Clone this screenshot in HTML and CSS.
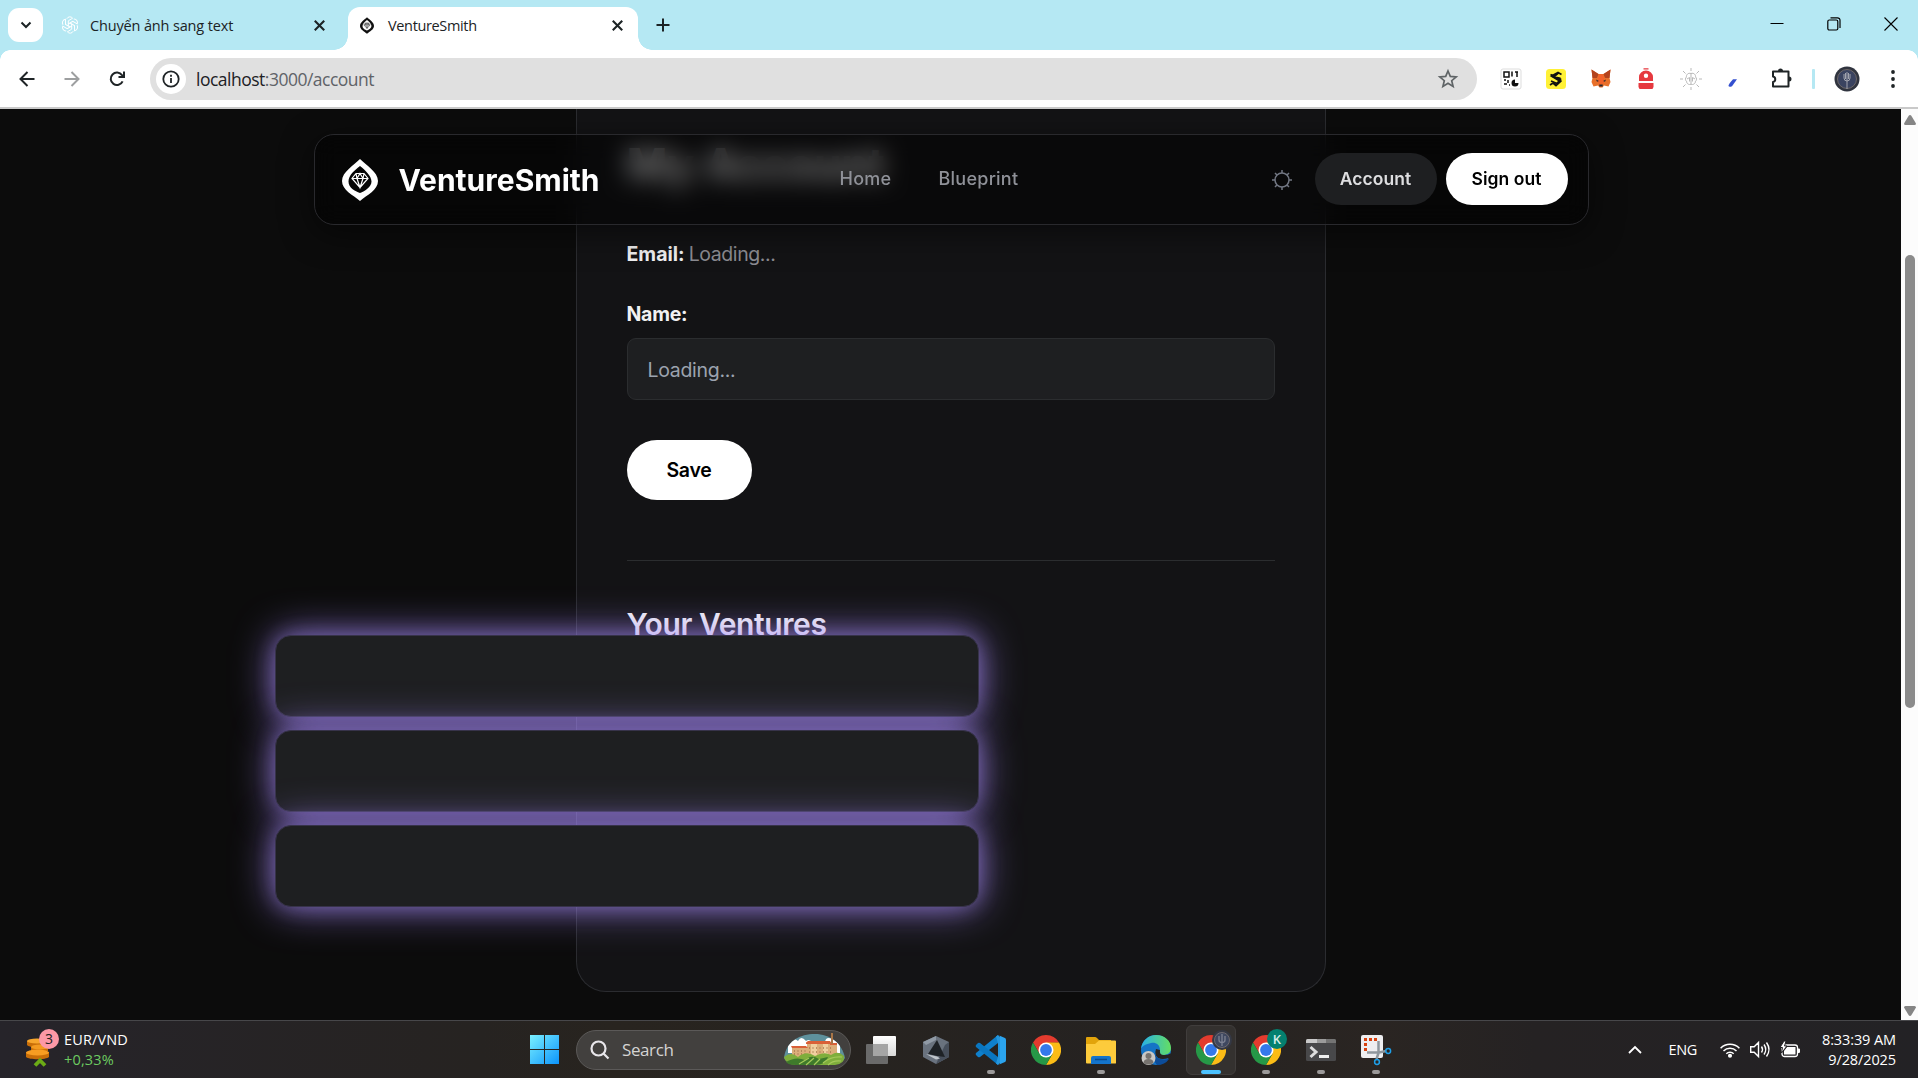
FILE: index.html
```html
<!DOCTYPE html>
<html lang="en">
<head>
<meta charset="utf-8">
<title>VentureSmith</title>
<link rel="stylesheet" href="styles.css">
</head>
<body>
<svg class="defs" width="0" height="0">
  <symbol id="chrome" viewBox="0 0 30 30">
    <path fill="#e33b2e" d="M15 0A15 15 0 0 1 28 7.500L15 8 8.500 18.700 2 7.500A15 15 0 0 1 15 0z"/>
    <path fill="#fbbc16" d="M28 7.500A15 15 0 0 1 15 30L21.500 18.700 15 7.500z"/>
    <path fill="#269847" d="M2 7.500A15 15 0 0 0 15 30l6.500-11.300L8.500 18.700z"/>
    <circle cx="15" cy="15" r="7.500" fill="#fff"/><circle cx="15" cy="15" r="5.900" fill="#3479ea"/>
  </symbol>
  <symbol id="x" viewBox="0 0 10 10"><path d="M.7.7l8.600 8.600M9.300.7L.7 9.300" fill="none" stroke="#1c2325" stroke-width="1.900"/></symbol>
  <symbol id="gem" viewBox="0 0 36 42">
    <path fill="currentColor" fill-rule="evenodd" d="M18 0C24 6 36 13 36 22 36 31 25 36 18 42 11 36 0 31 0 22 0 13 12 6 18 0zM18 7C13 11 6.500 16 6.500 22.500S13 32 18 34C23 32 29.500 28 29.500 22.500S23 11 18 7z"/>
    <path fill="none" stroke="currentColor" stroke-width="1.200" d="M14 14.500h8l4 5-8 9-8-9zM10 19.500h16M14 14.500l1 5L18 28.500l3-9 1-5M15 19.500l3-5 3 5"/>
  </symbol>
</svg>

<div class="tabs">
  <div class="tab-list"><svg width="12" height="8" viewBox="0 0 12 8"><path d="M1.500 1.500L6 6l4.500-4.500" fill="none" stroke="#1c2325" stroke-width="2"/></svg></div>
  <div class="tab">
    <svg width="18" height="18" viewBox="0 0 18 18" fill="none" stroke="#fff" stroke-width="1"><g id="k"><path d="M5.800 2.800a3.400 3.400 0 0 1 5.800-.6L7.300 4.800v5.200"/></g><use href="#k" transform="rotate(60 9 9)"/><use href="#k" transform="rotate(120 9 9)"/><use href="#k" transform="rotate(180 9 9)"/><use href="#k" transform="rotate(240 9 9)"/><use href="#k" transform="rotate(300 9 9)"/></svg>
    <span class="tab-title t1">Chuyển ảnh sang text</span>
    <svg class="close" width="11" height="11"><use href="#x"/></svg>
  </div>
  <div class="tab active">
    <svg class="dark" width="14" height="17"><use href="#gem"/></svg>
    <span class="tab-title t2">VentureSmith</span>
    <svg class="close" width="11" height="11"><use href="#x"/></svg>
  </div>
  <svg class="plus" width="14" height="14"><path d="M7 .5v13M.5 7h13" stroke="#1c2325" stroke-width="2"/></svg>
  <div class="win">
    <svg width="14" height="14"><path d="M.5 6.500h13" stroke="#000"/></svg>
    <svg width="14" height="14" fill="none" stroke="#000" stroke-width="1.200"><rect x=".8" y="3" width="10" height="10" rx="1.500"/><path d="M3.500.8h7a2.500 2.500 0 0 1 2.500 2.500V11"/></svg>
    <svg width="14" height="14"><path d="M.5.5l13 13M13.500.5l-13 13" stroke="#000" stroke-width="1.100"/></svg>
  </div>
</div>

<div class="toolbar">
  <div class="navs">
    <svg width="16" height="16" viewBox="0 0 16 16" fill="none" stroke="#1f2426" stroke-width="2"><path d="M15.500 8H2M8.500 1L1.500 8l7 7"/></svg>
    <svg width="16" height="16" viewBox="0 0 16 16" fill="none" stroke="#9d9fa0" stroke-width="2"><path d="M.5 8h14M7.500 1l7 7-7 7"/></svg>
    <svg width="16" height="16" viewBox="0 0 16 16" fill="none" stroke="#1f2426" stroke-width="2"><path d="M13.600 10.300A6.200 6.200 0 1 1 13 4.200L15 6M15 .5V6H9.500"/></svg>
  </div>
  <div class="omnibox">
    <div class="info"><svg width="18" height="18" fill="none" stroke="#1f2426" stroke-width="1.800"><circle cx="9" cy="9" r="7.700"/><path d="M9 8v5M9 4.800v1.900"/></svg></div>
    <span class="url">localhost<i>:3000/account</i></span>
    <svg class="star" width="20" height="19" viewBox="0 0 20 19"><path d="M10 2l2.300 5.400 5.900.5-4.500 3.800 1.400 5.700L10 14.300l-5.100 3.100 1.400-5.700L1.800 7.900l5.900-.5z" fill="none" stroke="#5f6466" stroke-width="1.700"/></svg>
  </div>
  <div class="ext">
    <svg width="22" height="22" viewBox="0 0 22 22"><rect x="1" y="1" width="20" height="20" rx="2" fill="#fff" stroke="#ddd"/><path fill="none" stroke="#111" stroke-width="1.500" d="M4 4h5v5H4zM12 3.500v5M15 4h3M17 4v5M4 12h2M8 12v3M4 16h3M9 17h1"/><path fill="#111" d="M15 11.500v3.500h3.500a3.500 3.500 0 1 1-3.500-3.500z"/></svg>
    <svg width="22" height="22" viewBox="0 0 22 22"><rect x="1" y="1" width="20" height="20" rx="3.500" fill="#fff136"/><path fill="none" stroke="#111" stroke-width="1.800" d="M16.500 6.500l-3.500-2L6.500 8l9 5.500-4.500 4-3-2.500-3 2M5.500 6.500l11 7M14 4.500L8.500 9l7 1.500M6 13l6 2.500 4-5"/></svg>
    <svg width="20" height="19" viewBox="0 0 20 19"><path fill="#e8702a" d="M.5.5L7.500 5h5l7-4.500L18.500 9l1 4-2 4.500-4.500-1-1.500 2h-3L7 16.500l-4.500 1-2-4.500 1-4z"/><path fill="#b4421c" d="M.5.5L7.500 5 6 9 1.500 9zM19.500.5L12.500 5 14 9h4.500z"/><path fill="#f2612a" d="M8 5.500h4l1.500 6.500L12 15H8l-1.500-3z"/><path fill="#2a2730" d="M5 10.500l3 1.500-2 .8zM15 10.500l-3 1.500 2 .8zM8.300 15.500h3.400v2H8.300z"/></svg>
    <svg width="16" height="21" viewBox="0 0 16 21"><path fill="#e6393f" fill-rule="evenodd" d="M1 13V9a7 6.500 0 0 1 14 0v4zM8 5.500a2.200 2.200 0 1 0 0 4.400 2.200 2.200 0 0 0 0-4.400z"/><path fill="#e6393f" d="M5.500.3h5v1.200h-5zM.5 15h15v4l-1 2h-13l-1-2z"/></svg>
    <svg width="22" height="22" viewBox="0 0 22 22" fill="none" stroke="#b9b9b9"><path d="M11 0v3M11 19v3M0 11h3M19 11h3M3 3l2.500 2.500M16.500 16.500L19 19M19 3l-2.500 2.500M3 19l2.500-2.500M11 5v12"/><path d="M11 5.500c-3-1-5 1.500-4.500 3.500-1.500 1-1.300 3.500 0 4.200 0 2.500 2.500 4 4.500 3M11 5.500c3-1 5 1.500 4.500 3.500 1.500 1 1.300 3.500 0 4.200 0 2.500-2.500 4-4.500 3M7 11l2.500-1.500v4M15 11l-2.500-1.500v4"/></svg>
    <svg class="slash" width="9" height="8" viewBox="0 0 9 8"><path fill="#3450cf" d="M5 0.300H9L4 7.300Q1 8.500.5 7 .3 5.500 5 .3z"/></svg>
    <svg width="21" height="21" viewBox="0 0 21 21"><path fill="none" stroke="#1f2426" stroke-width="2" stroke-linejoin="round" d="M2 3.500h15.500v15H2V14c3-.5 3-5 0-5.500z"/><path fill="#1f2426" d="M7 3a2.500 2.500 0 0 1 5 0zM18 8.500a2.500 2.500 0 0 1 0 5z"/></svg>
    <span class="rule"></span>
    <svg width="26" height="26" viewBox="0 0 26 26"><circle cx="13" cy="13" r="12.500" fill="#30343f"/><circle cx="13" cy="13" r="9.500" fill="#3a4360" stroke="#7b726e" stroke-width=".8"/><path d="M13 6v17M10 8v4a3 3 0 0 0 6 0V8M11.500 7v6M14.500 7v6" fill="none" stroke="#a2a4ae" stroke-width="1"/></svg>
    <svg width="4" height="18" fill="#1f2426"><circle cx="2" cy="2" r="1.900"/><circle cx="2" cy="9" r="1.900"/><circle cx="2" cy="16" r="1.900"/></svg>
  </div>
</div>

<div class="view">
  <main class="page">
    <section class="card">
      <h1>My Account</h1>
      <p class="email"><b>Email:</b> <span>Loading...</span></p>
      <label>Name:</label>
      <div class="field">Loading...</div>
      <button class="save">Save</button>
      <hr>
      <h2>Your Ventures</h2>
    </section>
    <div class="rows"><div></div><div></div><div></div></div>
    <header class="site">
      <svg class="logo" width="36" height="42"><use href="#gem"/></svg>
      <span class="brand">VentureSmith</span>
      <nav><a class="home">Home</a><a class="blue">Blueprint</a></nav>
      <svg class="sun" width="20" height="20" viewBox="0 0 20 20" fill="none" stroke="#727783" stroke-width="1.500"><circle cx="10" cy="10" r="7"/><path d="M10 0v3M10 17v3M0 10h3M17 10h3M3 3l2.200 2.200M14.800 14.800L17 17M17 3l-2.200 2.200M3 17l2.200-2.200"/></svg>
      <a class="btn acc">Account</a>
      <a class="btn out">Sign out</a>
    </header>
  </main>
  <div class="scroll">
    <svg width="12" height="10"><path fill="#858585" d="M6 0q.8 0 1.300.8L12 8.500q0 1.500-1.500 1.500h-9Q0 10 0 8.500L4.700.8Q5.200 0 6 0z"/></svg>
    <div class="thumb"></div>
    <svg class="down" width="12" height="10"><path fill="#858585" d="M6 10q.8 0 1.300-.8L12 1.500Q12 0 10.500 0h-9Q0 0 0 1.500l4.700 7.700Q5.200 10 6 10z"/></svg>
  </div>
</div>

<footer class="taskbar">
  <div class="widget">
    <svg width="36" height="40" viewBox="0 0 36 40">
      <path fill="#c96e08" d="M1 11v4c2 3 17 3 19 0v-4zM5 16v5h17v-5zM0 22v5c3 3 20 3 23 0v-5z"/>
      <ellipse cx="11" cy="11" rx="10" ry="2.600" fill="#f7a62c"/><ellipse cx="14" cy="17" rx="9" ry="2.600" fill="#f39a20"/><ellipse cx="11.500" cy="22.500" rx="11.500" ry="3" fill="#f79d22"/>
      <path d="M9 35.500l5-5 5 5" fill="none" stroke="#6cab16" stroke-width="3.800"/>
      <circle cx="23" cy="9" r="10" fill="#fc98a6"/><text x="23" y="14" text-anchor="middle" class="badge">3</text>
    </svg>
    <div><span class="w1">EUR/VND</span><span class="w2">+0,33%</span></div>
  </div>
  <svg class="start" width="29" height="29" viewBox="0 0 29 29"><defs><linearGradient id="wg" gradientUnits="userSpaceOnUse" x1="0" y1="0" x2="29" y2="29"><stop stop-color="#7af0ff"/><stop offset="1" stop-color="#0c94fb"/></linearGradient></defs><path fill="url(#wg)" d="M0 0h14v14H0zM15 0h14v14H15zM0 15h14v14H0zM15 15h14v14H15z"/></svg>
  <div class="search">
    <svg width="20" height="20" viewBox="0 0 20 20" fill="none" stroke="#e8e6ea" stroke-width="2.200"><circle cx="8.500" cy="8.500" r="7"/><path d="M13.500 13.500l5 5"/></svg>
    <span>Search</span>
    <svg class="castle" width="61" height="33" viewBox="0 0 61 33">
      <defs><clipPath id="cc"><path d="M0 25C2 8 16 1 31 1s27 9 30 24c-3 6-14 7-30 7S3 32 0 25z"/></clipPath></defs>
      <g clip-path="url(#cc)"><path fill="#5e909c" d="M0 0h61v33H0z"/><path fill="#fff" d="M4 12q5-9 10-4 3-6 8 0 4-3 6 2l13-1q1-6 7-3 8 0 8 8v6H4z"/></g>
      <path fill="#dcae7a" d="M8 15h16v9H8zM23 10h24v14H23zM47 12h6v10h-6z"/><path fill="#f0cf9f" d="M27 11h6v12h-6zM39 11h5v12h-5z"/>
      <path fill="#d96038" d="M7 13h15l2 2H8zM22 9.500L24 8h22l2 3H22zM46 10h7v2h-7z"/><path fill="#a87547" d="M47 0h2v11h-2z"/>
      <path fill="none" stroke="#a87850" stroke-dasharray="1 2.500" d="M10 18h14M10 21h14M25 15h22M25 19h22" stroke-width="1.300"/>
      <path fill="#7fae3c" d="M0 24q7-6 14 0 8-7 17-1 9-5 16-1 7-5 13 1 1 8-9 9H12Q1 31 0 24z"/><path fill="#3f7a2b" d="M2 29q10-6 19-2 6-6 14-1l9-2q-2 7-12 8H12q-8 0-10-3z"/><path fill="none" stroke="#a5c95a" stroke-width="1.200" d="M15 31l10-6M22 32l8-7M30 32l6-6M39 30q8-7 19-6M44 32q5-5 13-4"/>
    </svg>
  </div>
  <div class="apps">
    <div class="app"><svg width="30" height="28" viewBox="0 0 30 28"><defs><linearGradient id="tv" x2="0" y2="1"><stop stop-color="#fff"/><stop offset="1" stop-color="#d8d8d8"/></linearGradient></defs><rect x="7" width="23" height="20" rx="1" fill="url(#tv)"/><rect y="8" width="22" height="20" rx="1" fill="#6a6a6a"/><path fill="#a5a5a5" d="M7 8h15v12H7z"/></svg></div>
    <div class="app"><svg width="26" height="28" viewBox="0 0 26 28"><path fill="#69727e" d="M13 0l13 6v15l-13 7-13-7V6z"/><path fill="#8f99a5" d="M13 0L0 6l3 3 10-5z"/><path fill="#474f5b" d="M13 28l13-7V6l-4 3z"/><path fill="#1e2226" d="M14 4l8 17-8-1-9-2z"/><path fill="#bfc5cb" d="M3 18l11 2.500 3 2-4 1z"/></svg></div>
    <div class="app run"><svg width="30" height="30" viewBox="0 0 30 30"><path fill="#0f80cc" d="M22 0v8L4 22q-1 .6-2 0l-2-2q-.7-1 0-2z"/><path fill="#0a76c0" d="M22 30v-8L4 8q-1-.6-2 0l-2 2q-.7 1 0 2z"/><path fill="#2ba4ee" d="M22 0l7 3q1 .5 1 2v20q0 1.500-1 2l-7 3q2-.7 2-2V2q0-1.300-2-2z"/><path fill="#2496dd" d="M22 0l2 2v26l-2 2-2-1.500 2-7v-13L20 1.500z"/></svg></div>
    <div class="app"><svg width="30" height="30"><use href="#chrome"/></svg></div>
    <div class="app run"><svg width="30" height="28" viewBox="0 0 30 28"><path fill="#e2a40b" d="M0 2q0-1 1-1h8q1 0 2 1l2 2h12v6H0z"/><path fill="#fdcb3c" d="M0 8h9l4-3.500h16q1 0 1 1V27q0 .5-1 .5H1q-1 0-1-1z"/><path fill="#1474cb" d="M5 28v-6q0-2 2-2h16q2 0 2 2v6z"/><path d="M9 23.500h12" stroke="#0b4b8d" stroke-width="1.500"/></svg></div>
    <div class="app"><svg width="30" height="30" viewBox="0 0 30 30"><defs><linearGradient id="eg"><stop stop-color="#28b0e8"/><stop offset="1" stop-color="#64de62"/></linearGradient></defs><circle cx="15" cy="15" r="15" fill="#1574c6"/><path fill="url(#eg)" d="M0 14C1 5 8 0 15 0c9 0 15 6 15 13 0 5-4 7-8 7-5 0-4-2-3-5 0-6-5-8-9-7-5 1-9 3-10 6z"/><path fill="#262321" d="M19 15q-1 5 4 5 4 0 6.500-1.500L31 19l-3 4q-7 2-11 0-4-3-2-9z"/><path fill="#0c4c99" d="M14 18q1 8 14 6-4 6-12 6-5-5-2-12z"/><circle cx="7.500" cy="23" r="7" fill="#c9c7c5"/><circle cx="7.500" cy="21" r="3" fill="#77736f"/><path fill="#77736f" d="M2.500 28q0-4 5-4t5 4q-5 3-10 0z"/></svg></div>
    <div class="app run on"><svg width="36" height="36" viewBox="0 0 36 36"><use href="#chrome" y="6" width="30" height="30"/><circle cx="26" cy="11" r="10" fill="#343844"/><circle cx="26" cy="11" r="7.500" fill="#3f4860" stroke="#6e6a70"/><path d="M26 5v12M23 7v4q0 2.500 3 2.500t3-2.500V7" fill="none" stroke="#7d8293" stroke-width="1.300"/></svg></div>
    <div class="app run"><svg width="36" height="36" viewBox="0 0 36 36"><use href="#chrome" y="6" width="30" height="30"/><circle cx="26" cy="10" r="10" fill="#04806f"/><text x="26" y="15" text-anchor="middle" class="kay">K</text></svg></div>
    <div class="app run"><svg width="30" height="22" viewBox="0 0 30 22"><rect width="30" height="22" rx="1.500" fill="#48484a"/><path fill="#c9c9c9" d="M0 1.500Q0 0 1.500 0H11v4H0z"/><path fill="#9b9b9b" d="M11 0h9v4h-9z"/><path fill="#747474" d="M20 0h8.500Q30 0 30 1.500V4H20z"/><path d="M4.500 8l5.500 5-5.500 5" fill="none" stroke="#ddd" stroke-width="3"/><path fill="#eee" d="M13 16h10v3H13z"/></svg></div>
    <div class="app run"><svg width="30" height="30" viewBox="0 0 30 30"><rect width="22" height="23" rx="2" fill="#eeeef0"/><path d="M16 4.500H4.500V16" fill="none" stroke="#d8410e" stroke-width="3" stroke-dasharray="3 2"/><path d="M17.500 6v12l-2 6M6 17.500h12l7-1.500" fill="none" stroke="#8f979d" stroke-width="2.500"/><circle cx="27.200" cy="16" r="2.400" fill="none" stroke="#1e9fe8" stroke-width="1.500"/><circle cx="16" cy="27" r="2.400" fill="none" stroke="#1e9fe8" stroke-width="1.500"/></svg></div>
  </div>
  <div class="tray">
    <svg width="14" height="9"><path d="M1 8l6-6 6 6" fill="none" stroke="#fff" stroke-width="1.800"/></svg>
    <span class="eng">ENG</span>
    <svg class="wifi" width="20" height="16" viewBox="0 0 20 16" fill="none" stroke="#fff" stroke-width="1.500"><path d="M.6 6.200a13.300 13.300 0 0 1 18.800 0M3.500 9a9.200 9.200 0 0 1 13 0M6.300 11.800a5.200 5.200 0 0 1 7.400 0"/><circle cx="10" cy="13.800" r="1.300" fill="#fff"/></svg>
    <svg class="vol" width="20" height="17" viewBox="0 0 20 17" fill="none" stroke="#fff" stroke-width="1.400"><path d="M.7 5.800h3.500L8.500 1.500v14l-4.300-4.300H.7zM11.500 5.500q2 3 0 6M14 3.500q3.500 5 0 10M16.500 1.500q5 7 0 14"/></svg>
    <svg class="bat" width="20" height="17" viewBox="0 0 20 17"><rect x="2" y="4" width="15.500" height="11.500" rx="2.500" fill="none" stroke="#fff" stroke-width="1.300"/><path fill="#fff" d="M7 6h8.500v7.500H4V10zM18 7.500h1q1 0 1 1v2.500q0 1-1 1h-1z"/><path fill="#fff" stroke="#232225" d="M4 0L0 6.500h2.500L1.500 12 7 5H4.500L6 0z"/></svg>
    <div class="clock"><span class="c1">8:33:39 AM</span><span class="c2">9/28/2025</span></div>
  </div>
</footer>
</body>
</html>
```

FILE: styles.css
```css
* { box-sizing: border-box; }
body { margin: 0; width: 1918px; height: 1078px; overflow: hidden; display: flex; flex-direction: column; background: #0c0c0c; font-family: Inter, "Liberation Sans", sans-serif; }
svg { display: block; flex: none; overflow: visible; }
.defs { position: absolute; }

.tabs { height: 50px; background: #b5e8f3; display: flex; padding-left: 8px; font: 14.5px "Open Sans", sans-serif; color: #1c2325; flex: none; }
.tab-list { width: 35px; height: 34px; margin-top: 8px; border-radius: 11px; background: #fff; display: grid; place-items: center; }
.tab { width: 305px; display: flex; align-items: center; padding: 0 23px 0 18px; }
.tab-title { white-space: nowrap; margin-left: 11px; }
.t1 { letter-spacing: -.15px; }
.t2 { letter-spacing: -.35px; margin-left: 14px; }
.close { margin-left: auto; }
.active { position: relative; width: 290px; height: 43px; margin-top: 7px; background: #fff; border-radius: 12px 12px 0 0; padding: 0 15px 6px 12px; }
.active::before, .active::after { content: ""; position: absolute; bottom: 0; width: 14px; height: 14px; }
.active::before { left: -14px; background: radial-gradient(circle at 0 0, #b5e8f3 13.5px, #fff 14px); }
.active::after { right: -14px; background: radial-gradient(circle at 100% 0, #b5e8f3 13.5px, #fff 14px); }
.dark { color: #111; }
.plus { margin: 18px 0 0 18px; }
.win { display: flex; gap: 43px; margin: 17px 20px 0 auto; }

.toolbar { position: relative; height: 59px; flex: none; display: flex; align-items: center; background: #fff; border-bottom: 2px solid #c9c9c9; }
.toolbar::before, .toolbar::after { content: ""; position: absolute; top: 0; width: 10px; height: 10px; }
.toolbar::before { left: 0; background: radial-gradient(circle at 100% 100%, #fff 9.5px, #b5e8f3 10px); }
.toolbar::after { right: 0; background: radial-gradient(circle at 0 100%, #fff 9.5px, #b5e8f3 10px); }
.navs { display: flex; gap: 29px; padding-left: 19px; width: 150px; }
.omnibox { width: 1327px; height: 42px; border-radius: 21px; background: #e0e0e0; display: flex; align-items: center; padding: 0 19px 0 6px; }
.info { width: 30px; height: 30px; border-radius: 50%; background: #fff; display: grid; place-items: center; }
.url { margin-left: 10px; font: 17.5px "Open Sans", sans-serif; letter-spacing: -.5px; color: #202124; }
.url i { font-style: normal; color: #5f6368; }
.star { margin-left: auto; }
.ext { display: grid; grid-template-columns: repeat(5, 45px) 39px 58px 7px 60px 31px; place-items: center; margin-left: 11px; }
.slash { margin-top: 8px; }
.rule { width: 3px; height: 20px; background: #b5e8f3; border-radius: 1px; }

.view { flex: 1; display: flex; min-height: 0; }
.page { position: relative; width: 1901px; overflow: hidden; background: #0c0c0c; }
.card { width: 750px; height: 883px; margin: 0 auto; padding: 31px 50px 0; background: #131315; border: 1px solid #2b2c30; border-top: 0; border-radius: 0 0 30px 30px; color: #f1f1f2; font-size: 19.5px; }
h1 { margin: 0; font-size: 44px; line-height: 48px; letter-spacing: -.2px; font-weight: 700; }
.email { margin: 51px 0 0; line-height: 30px; letter-spacing: -.4px; color: #8c8c92; }
.email b { font-weight: 700; color: #f1f1f2; letter-spacing: 0; }
.email span { margin-left: -1px; }
label { display: block; margin-top: 30px; line-height: 30px; font-weight: 700; letter-spacing: -.25px; }
.field { height: 62px; margin-top: 9px; padding: 1px 20px 0; border: 1px solid #2b2d2f; border-radius: 9px; background: #1e1f21; color: #9ca3af; line-height: 60px; letter-spacing: -.3px; }
.save { display: block; width: 125px; height: 60px; margin-top: 40px; border: 0; border-radius: 30px; background: #fff; color: #000; font: 600 19.5px Inter, sans-serif; letter-spacing: -.25px; }
hr { height: 1px; margin: 60px 0 0; border: 0; background: #2b2d2f; }
h2 { margin: 44px 0 0; font-size: 30px; line-height: 38px; font-weight: 600; letter-spacing: -.4px; }
.rows { position: absolute; left: 275px; top: 526px; width: 704px; display: grid; gap: 13px; }
.rows div { height: 82px; border-radius: 16px; background: #1e1f21; border: 1px solid #37334a; box-shadow: 0 0 20px rgba(167,139,250,.35), 0 0 40px rgba(167,139,250,.8); }

.site { position: absolute; left: 313.5px; top: 25px; width: 1275px; height: 91px; display: flex; align-items: center; padding: 0 20px 0 27px; border: 1px solid #29292d; border-radius: 20px; background: rgba(0,0,0,.5); backdrop-filter: blur(12px); box-shadow: 0 8px 32px rgba(0,0,0,.5); }
.logo, .brand { color: #fff; }
.brand { margin-left: 21px; width: 202px; font-size: 30px; font-weight: 700; letter-spacing: 0; white-space: nowrap; }
nav { display: flex; margin-left: 239px; margin-top: -2px; font-size: 18px; font-weight: 500; letter-spacing: .25px; color: #8f9198; }
.home { width: 99px; }
.blue { width: 82px; }
.sun { margin-left: auto; margin-right: 23px; }
.btn { width: 122px; height: 52px; margin-top: -2px; border-radius: 26px; display: grid; place-items: center; font-size: 17.5px; font-weight: 600; letter-spacing: .05px; }
.acc { background: #1e1f21; color: #dedee0; }
.out { margin-left: 9px; background: #fff; color: #000; }
.scroll { width: 17px; background: #fcfcfc; display: flex; flex-direction: column; align-items: center; padding: 6px 0 4px; }
.thumb { width: 10px; height: 453px; margin-top: 130px; border-radius: 5px; background: #8b8b8b; }
.down { margin-top: auto; }

.taskbar { height: 58px; flex: none; display: flex; align-items: center; border-top: 1px solid #47474a; background: linear-gradient(90deg, #26242a, #262321 25%, #28241f 32%, #252221 60%, #2a2522 72%, #252223 80%, #232225); color: #fff; font-family: "Open Sans", sans-serif; font-size: 14.5px; }
.widget { width: 530px; padding-left: 26px; display: flex; gap: 2px; }
.widget span, .clock span { display: block; line-height: 20px; white-space: nowrap; }
.badge { font: 14px "Open Sans", sans-serif; fill: #222; }
.w2 { color: #6dcb61; }
.w1, .w2 { letter-spacing: .15px; }
.search { width: 275px; height: 40px; margin-left: 17px; border: 1px solid #5b5958; border-radius: 20px; background: #42403e; display: flex; align-items: center; padding: 0 5px 0 13px; font-size: 17px; color: #d5d4d3; }
.search span { margin-left: 12px; letter-spacing: -.4px; }
.castle { margin-left: auto; }
.apps { display: flex; margin-left: 2px; }
.app { position: relative; width: 55px; height: 50px; display: grid; place-items: center; }
.app svg[width="36"] { margin: -6px 0 0 6px; }
.run::after { content: ""; position: absolute; left: 23.5px; bottom: 1px; width: 8px; height: 4px; border-radius: 2px; background: #9b9999; }
.on::before { content: ""; position: absolute; inset: 0 2.5px; border-radius: 6px; border: 1px solid #403d3c; background: #34312f; }
.on svg { position: relative; }
.on::after { left: 17.5px; width: 20px; background: #4cc2ff; }
.kay { font: 600 13px "Open Sans", sans-serif; fill: #d5ece8; }
.tray { margin-left: auto; padding-right: 22px; display: flex; align-items: center; }
.eng { margin: 0 23px 0 26px; letter-spacing: -.3px; }
.vol { margin: 0 10px; }
.clock { width: 96px; text-align: right; letter-spacing: -.1px; }
```
